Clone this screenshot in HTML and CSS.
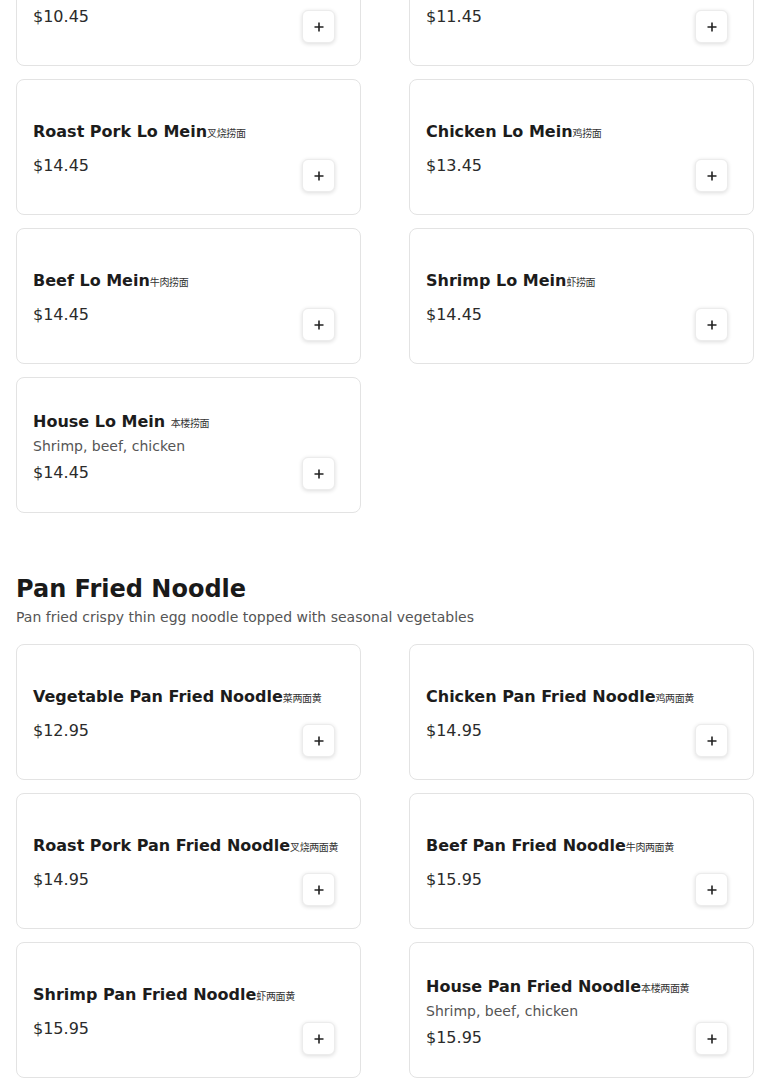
FILE: index.html
```html
<!DOCTYPE html>
<html lang="en">
<head>
<meta charset="utf-8">
<title>Menu</title>
<link rel="stylesheet" href="styles.css">
</head>
<body>
<main class="menu">
  <section class="section section-first">
    <div class="grid">
      <div class="card">
        <div class="title">Vegetable Lo Mein<span class="zh">菜捞面</span></div>
        <div class="price">$10.45</div>
        <button class="add" aria-label="Add"><svg viewBox="0 0 10 10" width="10" height="10"><path d="M5 0.5V9.5M0.5 5H9.5"/></svg></button>
      </div>
      <div class="card">
        <div class="title">Plain Lo Mein<span class="zh">净捞面</span></div>
        <div class="price">$11.45</div>
        <button class="add" aria-label="Add"><svg viewBox="0 0 10 10" width="10" height="10"><path d="M5 0.5V9.5M0.5 5H9.5"/></svg></button>
      </div>
      <div class="card">
        <div class="title">Roast Pork Lo Mein<span class="zh">叉烧捞面</span></div>
        <div class="price">$14.45</div>
        <button class="add" aria-label="Add"><svg viewBox="0 0 10 10" width="10" height="10"><path d="M5 0.5V9.5M0.5 5H9.5"/></svg></button>
      </div>
      <div class="card">
        <div class="title">Chicken Lo Mein<span class="zh">鸡捞面</span></div>
        <div class="price">$13.45</div>
        <button class="add" aria-label="Add"><svg viewBox="0 0 10 10" width="10" height="10"><path d="M5 0.5V9.5M0.5 5H9.5"/></svg></button>
      </div>
      <div class="card">
        <div class="title">Beef Lo Mein<span class="zh">牛肉捞面</span></div>
        <div class="price">$14.45</div>
        <button class="add" aria-label="Add"><svg viewBox="0 0 10 10" width="10" height="10"><path d="M5 0.5V9.5M0.5 5H9.5"/></svg></button>
      </div>
      <div class="card">
        <div class="title">Shrimp Lo Mein<span class="zh">虾捞面</span></div>
        <div class="price">$14.45</div>
        <button class="add" aria-label="Add"><svg viewBox="0 0 10 10" width="10" height="10"><path d="M5 0.5V9.5M0.5 5H9.5"/></svg></button>
      </div>
      <div class="card">
        <div class="title has-desc">House Lo Mein <span class="zh">本楼捞面</span></div>
        <div class="desc">Shrimp, beef, chicken</div>
        <div class="price">$14.45</div>
        <button class="add" aria-label="Add"><svg viewBox="0 0 10 10" width="10" height="10"><path d="M5 0.5V9.5M0.5 5H9.5"/></svg></button>
      </div>
    </div>
  </section>

  <section class="section">
    <h2 class="section-title">Pan Fried Noodle</h2>
    <p class="section-desc">Pan fried crispy thin egg noodle topped with seasonal vegetables</p>
    <div class="grid">
      <div class="card">
        <div class="title">Vegetable Pan Fried Noodle<span class="zh">菜两面黄</span></div>
        <div class="price">$12.95</div>
        <button class="add" aria-label="Add"><svg viewBox="0 0 10 10" width="10" height="10"><path d="M5 0.5V9.5M0.5 5H9.5"/></svg></button>
      </div>
      <div class="card">
        <div class="title">Chicken Pan Fried Noodle<span class="zh">鸡两面黄</span></div>
        <div class="price">$14.95</div>
        <button class="add" aria-label="Add"><svg viewBox="0 0 10 10" width="10" height="10"><path d="M5 0.5V9.5M0.5 5H9.5"/></svg></button>
      </div>
      <div class="card">
        <div class="title">Roast Pork Pan Fried Noodle<span class="zh">叉烧两面黄</span></div>
        <div class="price">$14.95</div>
        <button class="add" aria-label="Add"><svg viewBox="0 0 10 10" width="10" height="10"><path d="M5 0.5V9.5M0.5 5H9.5"/></svg></button>
      </div>
      <div class="card">
        <div class="title">Beef Pan Fried Noodle<span class="zh">牛肉两面黄</span></div>
        <div class="price">$15.95</div>
        <button class="add" aria-label="Add"><svg viewBox="0 0 10 10" width="10" height="10"><path d="M5 0.5V9.5M0.5 5H9.5"/></svg></button>
      </div>
      <div class="card">
        <div class="title">Shrimp Pan Fried Noodle<span class="zh">虾两面黄</span></div>
        <div class="price">$15.95</div>
        <button class="add" aria-label="Add"><svg viewBox="0 0 10 10" width="10" height="10"><path d="M5 0.5V9.5M0.5 5H9.5"/></svg></button>
      </div>
      <div class="card">
        <div class="title has-desc">House Pan Fried Noodle<span class="zh">本楼两面黄</span></div>
        <div class="desc">Shrimp, beef, chicken</div>
        <div class="price">$15.95</div>
        <button class="add" aria-label="Add"><svg viewBox="0 0 10 10" width="10" height="10"><path d="M5 0.5V9.5M0.5 5H9.5"/></svg></button>
      </div>
    </div>
  </section>
</main>
</body>
</html>
```

FILE: styles.css
```css
* {
  box-sizing: border-box;
}

html, body {
  margin: 0;
  padding: 0;
  background: #ffffff;
}

body {
  font-family: "DejaVu Sans", "Noto Sans CJK SC", sans-serif;
  color: #1f1f1f;
}

.menu {
  padding: 0 16px;
}

.section-first {
  margin-top: -70px;
}

.section + .section {
  margin-top: 60px;
}

.section-title {
  margin: 0;
  font-size: 24px;
  line-height: 32px;
  font-weight: 700;
  color: #1a1a1a;
}

.section-desc {
  margin: 2px 0 17px;
  font-size: 14px;
  line-height: 20px;
  color: #555555;
}

.grid {
  display: grid;
  grid-template-columns: 1fr 1fr;
  column-gap: 48px;
  row-gap: 13px;
}

.card {
  position: relative;
  height: 136px;
  padding: 4px 16px 0;
  border: 1px solid #e3e3e3;
  border-radius: 8px;
  background: #ffffff;
  display: flex;
  flex-direction: column;
  justify-content: center;
}

.title {
  font-size: 16px;
  line-height: 24px;
  font-weight: 700;
  color: #1c1c1c;
  margin-bottom: 10px;
  white-space: nowrap;
}

.title.has-desc {
  margin-bottom: 4px;
}

.zh {
  font-family: "Noto Sans CJK SC", sans-serif;
  font-weight: 400;
  font-size: 10px;
  line-height: 1;
  letter-spacing: -0.4px;
  color: #333333;
}

.desc {
  font-size: 14px;
  line-height: 17px;
  color: #555555;
  margin-bottom: 6px;
}

.price {
  font-size: 16px;
  line-height: 24px;
  color: #2b2b2b;
}

.add {
  position: absolute;
  right: 25px;
  bottom: 22px;
  width: 33px;
  height: 33px;
  padding: 0;
  border: 1px solid #ececec;
  border-radius: 6px;
  background: #ffffff;
  box-shadow: 0 1px 4px rgba(0, 0, 0, 0.14);
  display: flex;
  align-items: center;
  justify-content: center;
  cursor: pointer;
}

.add svg {
  display: block;
}

.add path {
  stroke: #222222;
  stroke-width: 1.6;
  fill: none;
}
```
